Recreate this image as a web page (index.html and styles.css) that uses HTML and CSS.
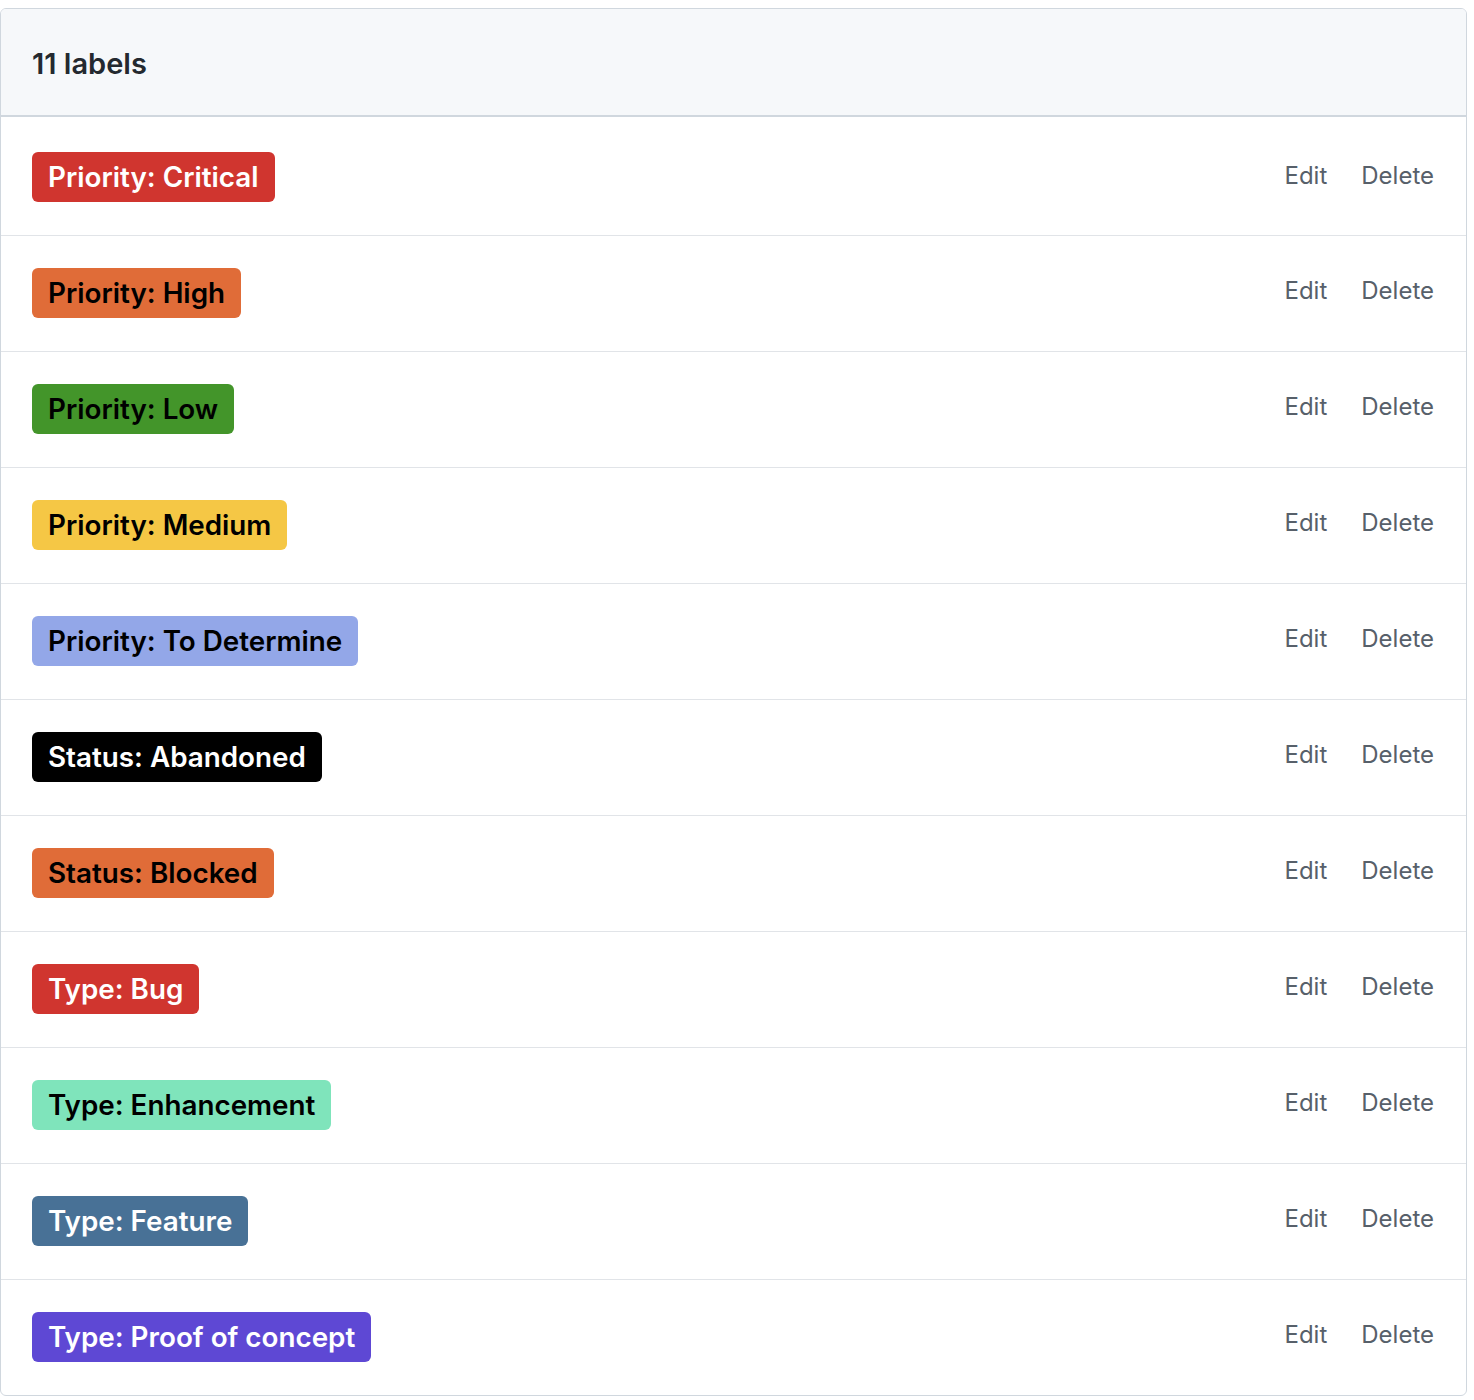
FILE: index.html
```html
<!DOCTYPE html>
<html lang="en">
<head>
<meta charset="utf-8">
<title>Labels</title>
<link rel="stylesheet" href="styles.css">
</head>
<body>
<div class="box">
  <div class="box-header">11 labels</div>
  <ul class="label-list">
    <li class="row"><span class="label l-critical">Priority: Critical</span><div class="actions"><a class="action">Edit</a><a class="action">Delete</a></div></li>
    <li class="row"><span class="label l-high">Priority: High</span><div class="actions"><a class="action">Edit</a><a class="action">Delete</a></div></li>
    <li class="row"><span class="label l-low">Priority: Low</span><div class="actions"><a class="action">Edit</a><a class="action">Delete</a></div></li>
    <li class="row"><span class="label l-medium">Priority: Medium</span><div class="actions"><a class="action">Edit</a><a class="action">Delete</a></div></li>
    <li class="row"><span class="label l-tbd">Priority: To Determine</span><div class="actions"><a class="action">Edit</a><a class="action">Delete</a></div></li>
    <li class="row"><span class="label l-abandoned">Status: Abandoned</span><div class="actions"><a class="action">Edit</a><a class="action">Delete</a></div></li>
    <li class="row"><span class="label l-blocked">Status: Blocked</span><div class="actions"><a class="action">Edit</a><a class="action">Delete</a></div></li>
    <li class="row"><span class="label l-bug">Type: Bug</span><div class="actions"><a class="action">Edit</a><a class="action">Delete</a></div></li>
    <li class="row"><span class="label l-enh">Type: Enhancement</span><div class="actions"><a class="action">Edit</a><a class="action">Delete</a></div></li>
    <li class="row"><span class="label l-feature">Type: Feature</span><div class="actions"><a class="action">Edit</a><a class="action">Delete</a></div></li>
    <li class="row"><span class="label l-poc">Type: Proof of concept</span><div class="actions"><a class="action">Edit</a><a class="action">Delete</a></div></li>
  </ul>
</div>
</body>
</html>
```

FILE: styles.css
```css
html, body {
  background: #ffffff;
}
body {
  margin: 8px 7px 0 0;
  font-family: Inter, "Liberation Sans", Arial, sans-serif;
}
.box {
  border: 1px solid #d0d7de;
  border-radius: 6px;
  overflow: hidden;
}
.box-header {
  background: #f6f8fa;
  height: 103px;
  padding-top: 3px;
  border-bottom: 2px solid #d0d7de;
  padding-left: 31px;
  display: flex;
  align-items: center;
  font-size: 29px;
  font-weight: 600;
  color: #24292f;
}
.label-list {
  list-style: none;
  margin: 0;
  padding: 0;
}
.row {
  display: flex;
  align-items: center;
  justify-content: space-between;
  padding: 31px 32px 33px 31px;
  height: 51px;
  border-top: 1px solid #e1e4e8;
}
.row:first-child {
  border-top: none;
  padding-top: 35px;
  padding-bottom: 33px;
  height: 50px;
}
.label {
  display: inline-block;
  height: 50px;
  line-height: 50px;
  padding: 0 16px;
  border-radius: 6px;
  font-size: 27.8px;
  font-weight: 600;
  color: #000000;
  white-space: nowrap;
}
.l-critical { background: #d0352f; color: #ffffff; }
.l-high { background: #e06c38; }
.l-low { background: #43952a; }
.l-medium { background: #f5c745; }
.l-tbd { background: #93a7e8; }
.l-abandoned { background: #000000; color: #ffffff; }
.l-blocked { background: #e06c38; }
.l-bug { background: #d0352f; color: #ffffff; }
.l-enh { background: #7fe4bb; }
.l-feature { background: #487196; color: #ffffff; }
.l-poc { background: #5e48d4; color: #ffffff; }
.actions {
  display: flex;
  gap: 34px;
  margin-top: -4px;
}
.action {
  font-size: 24px;
  color: #57606a;
  cursor: pointer;
}
```
